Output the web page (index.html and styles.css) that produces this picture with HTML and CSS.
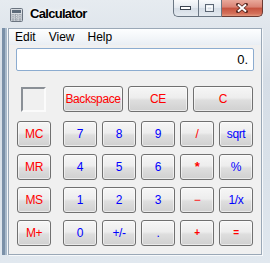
FILE: index.html
```html
<!DOCTYPE html>
<html lang="en">
<head>
    <meta charset="UTF-8">
    <title>Calculator</title>
    <link rel="stylesheet" href="styles.css">
</head>
<body>
    <div class="window">
        <!-- Title bar -->
        <div class="titlebar">
            <svg class="app-icon" width="13" height="14" viewBox="0 0 13 14">
                <rect x="0.5" y="0.5" width="12" height="13" rx="1" fill="#d9dde2" stroke="#6b7480"/>
                <rect x="2" y="2" width="9" height="3" fill="#5d6b7a"/>
                <g fill="#f6f8fa" stroke="#8a939d" stroke-width="0.6">
                    <rect x="2" y="6.5" width="2" height="1.6"/>
                    <rect x="5.5" y="6.5" width="2" height="1.6"/>
                    <rect x="9" y="6.5" width="2" height="1.6"/>
                    <rect x="2" y="9" width="2" height="1.6"/>
                    <rect x="5.5" y="9" width="2" height="1.6"/>
                    <rect x="9" y="9" width="2" height="1.6"/>
                    <rect x="2" y="11.3" width="2" height="1.2"/>
                    <rect x="5.5" y="11.3" width="2" height="1.2"/>
                    <rect x="9" y="11.3" width="2" height="1.2"/>
                </g>
            </svg>
            <span class="title">Calculator</span>
            <div class="caption-buttons">
                <span class="cap-btn cap-min">
                    <svg width="12" height="5" viewBox="0 0 12 5"><rect x="0.5" y="0.5" width="10" height="3" fill="#fff" stroke="#3b4450"/></svg>
                </span>
                <span class="cap-btn cap-max">
                    <svg width="10" height="9" viewBox="0 0 10 9"><rect x="0.5" y="0.5" width="8" height="7" fill="none" stroke="#5b6673"/><rect x="2" y="2.5" width="5" height="3.5" fill="none" stroke="#fff"/></svg>
                </span>
                <span class="cap-btn cap-close">
                    <svg width="12" height="10" viewBox="0 0 12 10">
                        <path d="M2 1.5 L10 8.5 M10 1.5 L2 8.5" stroke="#5a2a22" stroke-width="3.6" stroke-linecap="square"/>
                        <path d="M2 1.5 L10 8.5 M10 1.5 L2 8.5" stroke="#fff" stroke-width="2"/>
                    </svg>
                </span>
            </div>
        </div>

        <!-- Client area -->
        <div class="client">
            <div class="menubar">
                <span class="menu-item">Edit</span>
                <span class="menu-item">View</span>
                <span class="menu-item">Help</span>
            </div>

            <div class="display">0.</div>

            <div class="keypad">
                <div class="mem-col">
                    <div class="mem-slot"><div class="mem-indicator"></div></div>
                    <button class="key red">MC</button>
                    <button class="key red">MR</button>
                    <button class="key red">MS</button>
                    <button class="key red">M+</button>
                </div>

                <div class="main-col">
                    <div class="top-row">
                        <button class="key wide red">Backspace</button>
                        <button class="key wide red">CE</button>
                        <button class="key wide red">C</button>
                    </div>
                    <div class="keys">
                        <button class="key blue">7</button>
                        <button class="key blue">8</button>
                        <button class="key blue">9</button>
                        <button class="key red">/</button>
                        <button class="key blue">sqrt</button>

                        <button class="key blue">4</button>
                        <button class="key blue">5</button>
                        <button class="key blue">6</button>
                        <button class="key red bold">*</button>
                        <button class="key blue">%</button>

                        <button class="key blue">1</button>
                        <button class="key blue">2</button>
                        <button class="key blue">3</button>
                        <button class="key red">&minus;</button>
                        <button class="key blue">1/x</button>

                        <button class="key blue">0</button>
                        <button class="key blue">+/-</button>
                        <button class="key blue">.</button>
                        <button class="key red small">+</button>
                        <button class="key red small">=</button>
                    </div>
                </div>
            </div>
        </div>
    </div>
</body>
</html>
```

FILE: styles.css
```css
/* Basic reset */
* {
    margin: 0;
    padding: 0;
    box-sizing: border-box;
}

body {
    width: 270px;
    height: 263px;
    overflow: hidden;
    font-family: "Liberation Sans", Arial, sans-serif;
}

/* Vista glass frame */
.window {
    width: 270px;
    height: 263px;
    display: flex;
    flex-direction: column;
    background: linear-gradient(#e6ebf0, #d5dde6 30%, #dae2ea 70%, #e1e8ef);
}

/* Title bar */
.titlebar {
    height: 28px;
    display: flex;
    align-items: flex-start;
    padding-left: 10px;
}

.app-icon {
    margin-top: 8px;
    flex-shrink: 0;
}

.title {
    margin-left: 7px;
    margin-top: 6px;
    font-size: 13px;
    line-height: 16px;
    font-weight: bold;
    letter-spacing: -0.7px;
    color: #000;
    text-shadow: 0 0 6px #fff, 0 0 3px #fff;
}

.caption-buttons {
    margin-left: auto;
    margin-right: 7px;
    display: flex;
    height: 17px;
}

.cap-btn {
    display: flex;
    align-items: center;
    justify-content: center;
    height: 17px;
    border: 1px solid #6b7784;
    border-top: none;
}

.cap-min {
    width: 25px;
    border-right: none;
    border-bottom-left-radius: 5px;
    background: linear-gradient(rgba(255, 255, 255, 0.75), rgba(226, 232, 239, 0.6) 50%, rgba(200, 210, 222, 0.55) 50%, rgba(228, 234, 240, 0.7));
}

.cap-max {
    width: 24px;
    background: linear-gradient(rgba(255, 255, 255, 0.75), rgba(226, 232, 239, 0.6) 50%, rgba(200, 210, 222, 0.55) 50%, rgba(228, 234, 240, 0.7));
}

.cap-close {
    width: 41px;
    border-left: none;
    border-color: #6b3a33;
    border-bottom-right-radius: 5px;
    background: linear-gradient(#e9a99b, #d98273 45%, #c5523e 50%, #d4705a 85%, #e29a80);
}

/* Client area */
.client {
    flex: 1;
    margin: 0 8px 8px 8px;
    background: #f0f0f0;
    border: 1px solid #9aa8b7;
    box-shadow: -1px 0 0 #f4f7fa, -3px 0 0 #a9bacb, -6px 0 0 #7a90a8, 1px 1px 0 #f7f9fb;
    display: flex;
    flex-direction: column;
}

/* Menu bar */
.menubar {
    height: 16px;
    display: flex;
    gap: 13px;
    padding-left: 6px;
    background: linear-gradient(#fdfeff, #f3f6f9 55%, #e9eef4);
}

.menu-item {
    font-size: 12px;
    line-height: 16px;
    color: #000;
}

/* Display */
.display {
    margin: 3px 7px 0 7px;
    height: 23px;
    background: #fff;
    border: 1px solid #8cacd0;
    border-radius: 2px;
    text-align: right;
    padding-right: 5px;
    font-size: 13px;
    line-height: 21px;
    color: #000;
}

/* Keys */
.keypad {
    display: flex;
    gap: 12px;
    margin-top: 15px;
    padding-left: 8px;
}

.mem-col {
    display: flex;
    flex-direction: column;
    gap: 7px;
    width: 34px;
}

.mem-slot {
    height: 26px;
    margin-bottom: 2px;
    padding: 1px 0 0 4px;
}

.mem-indicator {
    width: 25px;
    height: 25px;
    border: 2px solid;
    border-color: #8a8f96 #fbfbfb #fbfbfb #8a8f96;
    background: #f0f0f0;
}

.top-row {
    display: flex;
    gap: 5px;
    margin-bottom: 9px;
}

.keys {
    display: grid;
    grid-template-columns: repeat(5, 34px);
    grid-auto-rows: 26px;
    gap: 7px 5px;
}

.key {
    width: 34px;
    height: 26px;
    border: 1px solid #707070;
    border-radius: 3px;
    background: linear-gradient(#f6f6f6, #ededed 45%, #dedede 55%, #d0d0d0);
    box-shadow: inset 0 0 0 1px rgba(255, 255, 255, 0.55);
    font-family: "Liberation Sans", Arial, sans-serif;
    font-size: 12px;
    line-height: 24px;
    letter-spacing: -0.4px;
    text-align: center;
}

.key.wide {
    width: 60px;
}

.red {
    color: #ff0000;
}

.blue {
    color: #0000ff;
}

.key.bold {
    font-weight: bold;
    font-size: 13px;
}

.key.small {
    font-size: 10px;
    font-weight: bold;
}
```
